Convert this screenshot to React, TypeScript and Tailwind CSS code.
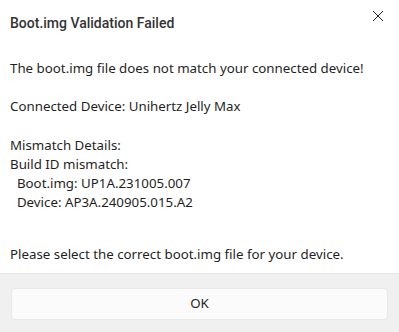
import React from "react";

export default function App() {
  const lines = [
    "The boot.img file does not match your connected device!",
    "",
    "Connected Device: Unihertz Jelly Max",
    "",
    "Mismatch Details:",
    "Build ID mismatch:",
    "  Boot.img: UP1A.231005.007",
    "  Device: AP3A.240905.015.A2",
  ];
  return (
    <div className="w-[399px] h-[332px] bg-white flex flex-col overflow-hidden">
      <div className="flex items-start justify-between pl-[10px] pr-[15px] pt-[13px]">
        <div
          className="text-[14px] leading-[20px] font-medium text-[#333333]"
          style={{ fontFamily: "Roboto, 'Noto Sans', sans-serif" }}
        >
          Boot.img Validation Failed
        </div>
        <svg width="12" height="12" viewBox="0 0 12 12" className="mt-[-3px]">
          <path d="M1 1 L11 11 M11 1 L1 11" stroke="#222" strokeWidth="1" fill="none" />
        </svg>
      </div>
      <div
        className="px-[10px] pt-[26px] text-[13.3px] leading-[19.2px] text-[#1f1f1f] whitespace-pre"
        style={{ fontFamily: "'Noto Sans', 'Open Sans', sans-serif" }}
      >
        {lines.map((l, i) => (
          <div key={i} className="h-[19.2px]">{l}</div>
        ))}
        <div className="mt-[32px]">Please select the correct boot.img file for your device.</div>
      </div>
      <div className="mt-auto h-[59px] bg-[#f0f0f0] border-t border-[#e5e5e5] px-[11px] pt-[14px]">
        <button
          className="w-full h-[32px] rounded-[4px] bg-[#fbfbfb] border border-[#e8e8e8] text-[13.3px] text-[#1f1f1f]"
          style={{ fontFamily: "'Noto Sans', 'Open Sans', sans-serif" }}
        >
          OK
        </button>
      </div>
    </div>
  );
}
